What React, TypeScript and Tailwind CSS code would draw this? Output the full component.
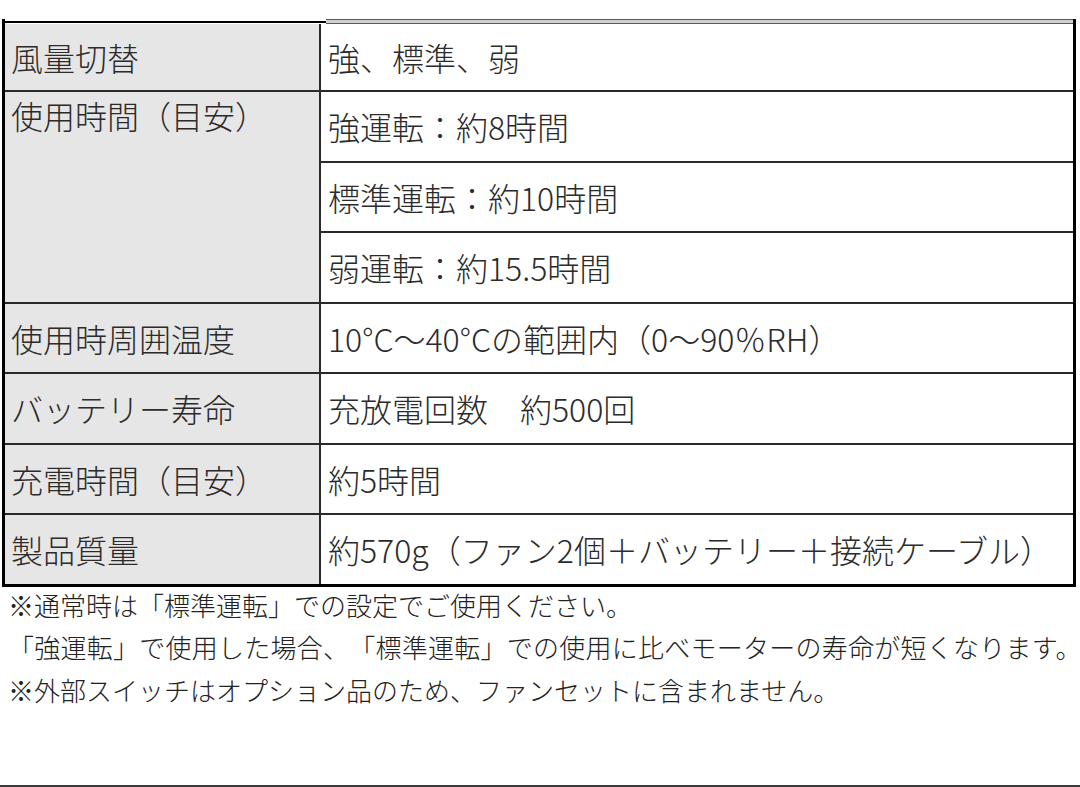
import React from "react";

const font = { fontFamily: '"Noto Sans CJK JP", "Noto Sans", sans-serif' };

export default function App() {
  const cellL = "bg-[#e7e6e6] border-r-2 border-[#2a2a2a] pl-[6px] flex items-center";
  const cellR = "pl-[7px] flex items-center";
  const line = "border-b-2 border-[#2a2a2a]";
  return (
    <div
      className="w-[1080px] h-[787px] bg-white border-b-2 border-[#3a3a3a] pt-[19px] px-[2px] text-[#2b2b2b] font-light [text-spacing-trim:space-all]"
      style={font}
    >
      <div className="w-[1074px] border-x-[3px] border-b-[3px] border-black">
        <div className="flex items-center h-[5px]">
          <div className="w-[321px] h-[2px] bg-black" />
          <div className="flex-1 h-[5px] border-y-[1.5px] border-[#5a5a5a] bg-[#d0d0d0]" />
        </div>
        <div className="grid grid-cols-[316px_1fr] text-[32px] leading-none">
          <div className={`${cellL} ${line} h-[68px]`}>風量切替</div>
          <div className={`${cellR} ${line} h-[68px]`}>強、標準、弱</div>

          <div className={`bg-[#e7e6e6] border-r-2 border-[#2a2a2a] pl-[6px] row-span-3 ${line} leading-[46px]`}>
            使用時間（目安）
          </div>
          <div className={`${cellR} ${line} h-[70.5px]`}>強運転：約8時間</div>
          <div className={`${cellR} ${line} h-[70.5px]`}>標準運転：約10時間</div>
          <div className={`${cellR} ${line} h-[70.5px]`}>弱運転：約15.5時間</div>

          <div className={`${cellL} ${line} h-[70.5px]`}>使用時周囲温度</div>
          <div className={`${cellR} ${line} h-[70.5px]`}>10°C～40°Cの範囲内（0～90％RH）</div>

          <div className={`${cellL} ${line} h-[70.5px]`}>バッテリー寿命</div>
          <div className={`${cellR} ${line} h-[70.5px] whitespace-pre`}>充放電回数　約500回</div>

          <div className={`${cellL} ${line} h-[70.5px]`}>充電時間（目安）</div>
          <div className={`${cellR} ${line} h-[70.5px]`}>約5時間</div>

          <div className={`${cellL} h-[68.5px]`}>製品質量</div>
          <div className={`${cellR} h-[68.5px]`}>約570g（ファン2個＋バッテリー＋接続ケーブル）</div>
        </div>
      </div>
      <div className="-mt-[3px] pl-[6px] text-[26px] leading-[42.5px] text-[#222] whitespace-nowrap">
        <p>※通常時は「標準運転」での設定でご使用ください。</p>
        <p className="tracking-[0.25px]">「強運転」で使用した場合、「標準運転」での使用に比べモーターの寿命が短くなります。</p>
        <p>※外部スイッチはオプション品のため、ファンセットに含まれません。</p>
      </div>
    </div>
  );
}
